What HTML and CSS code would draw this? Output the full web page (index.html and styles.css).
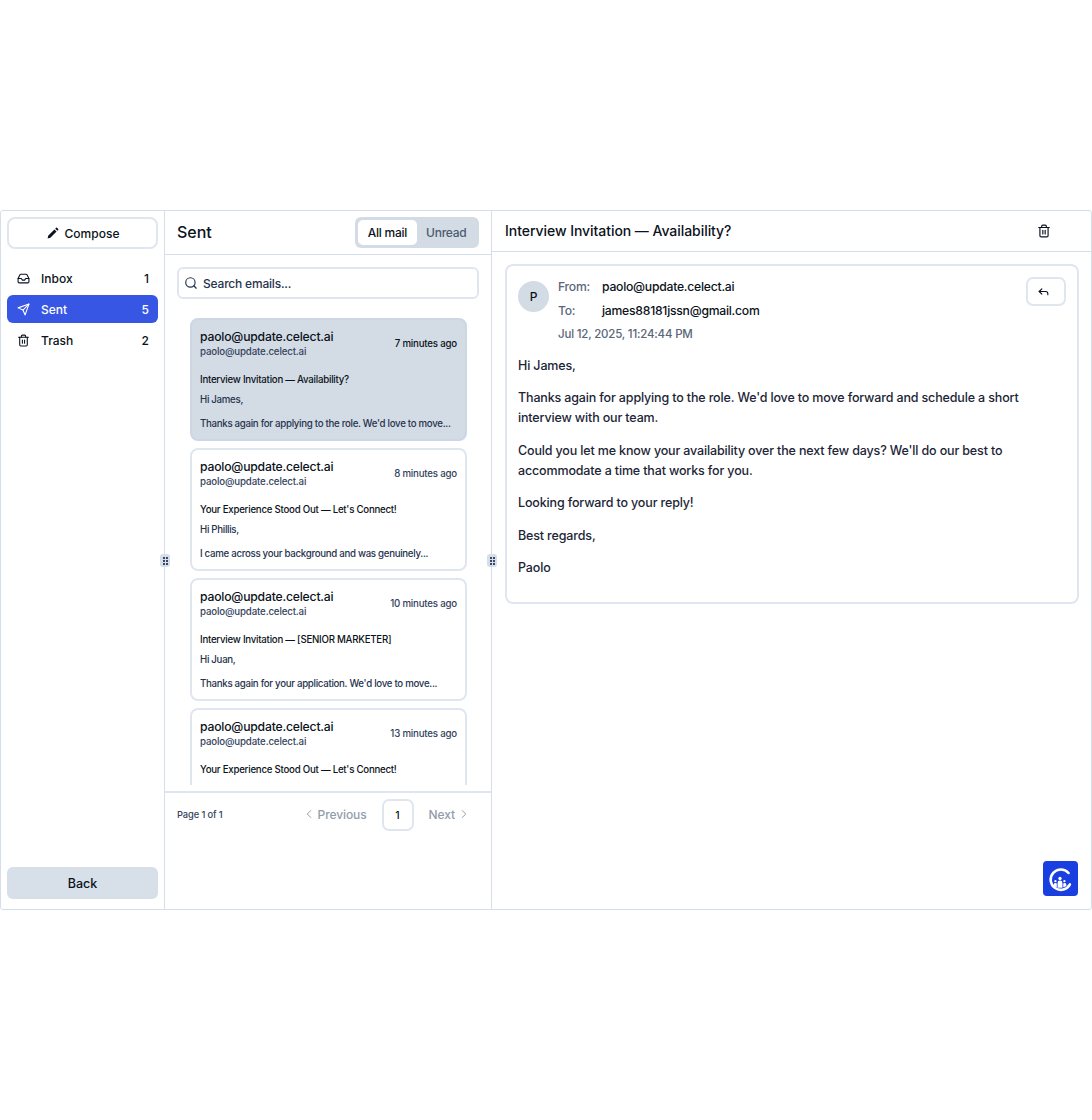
FILE: index.html
```html
<!DOCTYPE html>
<html lang="en">
<head>
  <meta charset="UTF-8">
  <title>Mail</title>
  <link rel="stylesheet" href="styles.css">
</head>
<body>

<div class="mail">
  <aside class="sidebar">
    <button class="compose">
      <svg class="icon-sm" viewBox="0 0 24 24"><path fill="currentColor" d="M3 21l1-5L15.500 4.500l4 4L8 20zM17 3l1.500-1.500a1.400 1.400 0 0 1 2 0l2 2a1.400 1.400 0 0 1 0 2L21 7z"/></svg>
      Compose
    </button>
    <nav class="nav">
      <a class="nav-item">
        <svg class="icon" viewBox="0 0 24 24"><path d="M22 12h-6l-2 3h-4l-2-3H2"/><path d="M5.500 5.100 2 12v6a2 2 0 0 0 2 2h16a2 2 0 0 0 2-2v-6l-3.500-6.900A2 2 0 0 0 16.800 4H7.200a2 2 0 0 0-1.700 1.100z"/></svg>
        <span class="nav-label">Inbox</span><span>1</span>
      </a>
      <a class="nav-item active">
        <svg class="icon" viewBox="0 0 24 24"><path d="M22 2 11 13"/><path d="M22 2 15 22l-4-9-9-4z"/></svg>
        <span class="nav-label">Sent</span><span>5</span>
      </a>
      <a class="nav-item">
        <svg class="icon" viewBox="0 0 24 24"><path d="M3 6h18"/><path d="M19 6v14a2 2 0 0 1-2 2H7a2 2 0 0 1-2-2V6"/><path d="M8 6V4a2 2 0 0 1 2-2h4a2 2 0 0 1 2 2v2"/><path d="M10 11v6"/><path d="M14 11v6"/></svg>
        <span class="nav-label">Trash</span><span>2</span>
      </a>
    </nav>
    <button class="back">Back</button>
  </aside>

  <section class="list">
    <header class="list-head">
      <h2>Sent</h2>
      <div class="tabs">
        <span class="tab on">All mail</span>
        <span class="tab">Unread</span>
      </div>
    </header>
    <div class="search">
      <svg class="icon" viewBox="0 0 24 24"><circle cx="11" cy="11" r="8"/><path d="m21 21-4.300-4.300"/></svg>
      <span>Search emails...</span>
    </div>
    <div class="cards">
      <article class="card selected">
        <div class="card-top">
          <div>
            <div class="card-name">paolo@update.celect.ai</div>
            <div class="card-mail">paolo@update.celect.ai</div>
          </div>
          <span class="card-time">7 minutes ago</span>
        </div>
        <div class="card-subject">Interview Invitation — Availability?</div>
        <p class="card-line">Hi James,</p>
        <p class="card-line gap">Thanks again for applying to the role. We'd love to move...</p>
      </article>
      <article class="card">
        <div class="card-top">
          <div>
            <div class="card-name">paolo@update.celect.ai</div>
            <div class="card-mail">paolo@update.celect.ai</div>
          </div>
          <span class="card-time">8 minutes ago</span>
        </div>
        <div class="card-subject">Your Experience Stood Out — Let's Connect!</div>
        <p class="card-line">Hi Phillis,</p>
        <p class="card-line gap">I came across your background and was genuinely...</p>
      </article>
      <article class="card">
        <div class="card-top">
          <div>
            <div class="card-name">paolo@update.celect.ai</div>
            <div class="card-mail">paolo@update.celect.ai</div>
          </div>
          <span class="card-time">10 minutes ago</span>
        </div>
        <div class="card-subject">Interview Invitation — [SENIOR MARKETER]</div>
        <p class="card-line">Hi Juan,</p>
        <p class="card-line gap">Thanks again for your application. We'd love to move...</p>
      </article>
      <article class="card">
        <div class="card-top">
          <div>
            <div class="card-name">paolo@update.celect.ai</div>
            <div class="card-mail">paolo@update.celect.ai</div>
          </div>
          <span class="card-time">13 minutes ago</span>
        </div>
        <div class="card-subject">Your Experience Stood Out — Let's Connect!</div>
      </article>
    </div>
    <footer class="pager">
      <span class="page-count">Page 1 of 1</span>
      <div class="pages">
        <span class="page-link">
          <svg class="icon-xs" viewBox="0 0 24 24"><path d="m15 18-6-6 6-6"/></svg>
          Previous
        </span>
        <span class="page-num">1</span>
        <span class="page-link">
          Next
          <svg class="icon-xs" viewBox="0 0 24 24"><path d="m9 18 6-6-6-6"/></svg>
        </span>
      </div>
    </footer>
    <span class="grip grip-left"><i></i><i></i><i></i><i></i><i></i><i></i></span>
    <span class="grip grip-right"><i></i><i></i><i></i><i></i><i></i><i></i></span>
  </section>

  <main class="detail">
    <header class="detail-head">
      <h1>Interview Invitation — Availability?</h1>
      <svg class="icon trash" viewBox="0 0 24 24"><path d="M3 6h18"/><path d="M19 6v14a2 2 0 0 1-2 2H7a2 2 0 0 1-2-2V6"/><path d="M8 6V4a2 2 0 0 1 2-2h4a2 2 0 0 1 2 2v2"/><path d="M10 11v6"/><path d="M14 11v6"/></svg>
    </header>
    <div class="message">
      <div class="message-top">
        <div class="avatar">P</div>
        <div class="meta">
          <div class="meta-row"><span class="meta-key">From:</span><span>paolo@update.celect.ai</span></div>
          <div class="meta-row"><span class="meta-key">To:</span><span>james88181jssn@gmail.com</span></div>
          <div class="meta-date">Jul 12, 2025, 11:24:44 PM</div>
        </div>
        <button class="reply">
          <svg class="icon-sm" viewBox="0 0 24 24"><path d="M9 17 4 12l5-5"/><path d="M20 18v-2a4 4 0 0 0-4-4H4"/></svg>
        </button>
      </div>
      <div class="message-body">
        <p>Hi James,</p>
        <p>Thanks again for applying to the role. We'd love to move forward and schedule a short interview with our team.</p>
        <p>Could you let me know your availability over the next few days? We'll do our best to accommodate a time that works for you.</p>
        <p>Looking forward to your reply!</p>
        <p>Best regards,</p>
        <p>Paolo</p>
      </div>
    </div>
    <div class="logo">
      <svg viewBox="0 0 36 36" width="35" height="35">
        <rect width="36" height="36" rx="4" fill="#1a3fe0"/>
        <path d="M26.300 12.300A10.500 10.500 0 1 0 27.700 24" fill="none" stroke="#fff" stroke-width="2.600" stroke-linecap="round"/>
        <g fill="#fff">
          <circle cx="17.500" cy="18" r="1.700"/><circle cx="12.800" cy="20.700" r="1.200"/><circle cx="22" cy="20.700" r="1.200"/>
          <path d="M15 27.500v-5a2.500 2.500 0 0 1 5 0v5z"/>
          <path d="M11 26v-1.800a1.800 1.800 0 0 1 3.200-1v3.800zM24 26v-1.800a1.800 1.800 0 0 0-3.200-1v3.800z"/>
        </g>
      </svg>
    </div>
  </main>
</div>

</body>
</html>
```

FILE: styles.css
```css
* {
  box-sizing: border-box;
}
body {
  margin: 0;
  padding-top: 210px;
  background: #fff;
  color: #0b1220;
  font-family: Inter, "Noto Sans", sans-serif;
}
svg {
  fill: none;
  stroke: currentColor;
  stroke-width: 2;
  stroke-linecap: round;
  stroke-linejoin: round;
  flex-shrink: 0;
}
.icon {
  width: 14px;
  height: 14px;
}
.icon-sm {
  width: 13px;
  height: 13px;
}
.icon-xs {
  width: 14px;
  height: 14px;
  stroke-width: 1.700;
}
.mail {
  position: relative;
  display: flex;
  height: 700px;
  border: 1px solid #d5deea;
  border-radius: 3px;
}

/* sidebar */
.sidebar {
  width: 164px;
  display: flex;
  flex-direction: column;
  padding: 6px 6px 10px;
  border-right: 1px solid #d5deea;
}
.compose {
  display: flex;
  align-items: center;
  justify-content: center;
  gap: 6px;
  height: 32px;
  background: #fff;
  border: 2px solid #e0e6f0;
  border-radius: 8px;
  font: 500 12px Inter, sans-serif;
  color: #0b1220;
}
.compose svg {
  stroke: none;
}
.nav {
  margin-top: 15px;
  flex: 1;
  display: flex;
  flex-direction: column;
  gap: 3px;
}
.nav-item {
  display: flex;
  align-items: center;
  height: 28px;
  padding: 0 9px 0 10px;
  gap: 11px;
  border-radius: 6px;
  font-size: 12px;
  font-weight: 500;
}
.nav-item .icon {
  width: 13px;
  height: 13px;
}
.nav-label {
  flex: 1;
}
.nav-item.active {
  background: #3756e4;
  color: #fff;
}
.back {
  height: 32px;
  background: #d7dfe9;
  border: 0;
  border-radius: 6px;
  font: 500 12.500px Inter, sans-serif;
  color: #0b1220;
}

/* list column */
.list {
  width: 327px;
  display: flex;
  flex-direction: column;
  border-right: 1px solid #d5deea;
}
.list-head {
  height: 44px;
  display: flex;
  align-items: center;
  justify-content: space-between;
  padding: 0 12px;
  border-bottom: 1px solid #d5deea;
}
.list-head h2 {
  margin: -2px 0 0;
  font-size: 16px;
  font-weight: 500;
}
.tabs {
  display: flex;
  height: 31px;
  padding: 3px;
  background: #d3dbe5;
  border-radius: 6px;
}
.tab {
  display: flex;
  align-items: center;
  padding: 0 9.500px;
  font-size: 12px;
  font-weight: 500;
  letter-spacing: -0.250px;
  color: #4b5a70;
  border-radius: 5px;
}
.tab.on {
  background: #fff;
  color: #0b1220;
}
.search {
  display: flex;
  align-items: center;
  gap: 5px;
  height: 32px;
  margin: 12px 12px 0;
  padding: 0 5px;
  border: 2px solid #e0e6f0;
  border-radius: 6px;
  font-size: 12px;
  font-weight: 500;
  letter-spacing: -0.200px;
  color: #26344d;
}
.cards {
  flex: 1;
  min-height: 0;
  overflow: hidden;
  display: flex;
  flex-direction: column;
  gap: 7px;
  margin: 3px 0 6px;
  padding: 16px 24px 0 25px;
}
.card {
  flex-shrink: 0;
  height: 123px;
  padding: 9px 8px;
  border: 2px solid #e0e6f0;
  border-radius: 8px;
  white-space: nowrap;
}
.card.selected {
  background: #d3dbe5;
  border-color: #cdd7e4;
}
.card-top {
  display: flex;
  align-items: center;
  justify-content: space-between;
}
.card-name {
  font-size: 12.200px;
  font-weight: 500;
  letter-spacing: -0.200px;
  line-height: 16px;
}
.card-mail {
  font-size: 9.700px;
  font-weight: 500;
  letter-spacing: -0.150px;
  line-height: 13px;
  color: #33425c;
}
.card-time {
  font-size: 9.700px;
  font-weight: 500;
  letter-spacing: -0.200px;
  color: #33425c;
}
.selected .card-time {
  color: #0b1220;
}
.card-subject {
  margin-top: 15px;
  font-size: 9.700px;
  font-weight: 500;
  letter-spacing: -0.250px;
  line-height: 14px;
}
.card-line {
  margin: 6px 0 0;
  font-size: 9.700px;
  font-weight: 500;
  letter-spacing: -0.300px;
  line-height: 14px;
  color: #26344d;
}
.card-line.gap {
  margin-top: 10px;
}
.pager {
  height: 118px;
  display: flex;
  align-items: flex-start;
  justify-content: space-between;
  padding: 6px 12px 0;
  border-top: 2px solid #e0e6f0;
}
.page-count {
  line-height: 32px;
  font-size: 9.300px;
  font-weight: 500;
  letter-spacing: -0.100px;
  color: #33425c;
}
.pages {
  display: flex;
  align-items: center;
  gap: 15px;
  margin-right: 8px;
}
.page-link {
  display: flex;
  align-items: center;
  gap: 2px;
  padding-bottom: 2px;
  font-size: 12px;
  font-weight: 500;
  letter-spacing: -0.100px;
  color: #939cab;
}
.page-num {
  width: 32px;
  height: 32px;
  display: flex;
  align-items: center;
  justify-content: center;
  border: 2px solid #e0e6f0;
  border-radius: 7px;
  font-size: 10.500px;
  font-weight: 500;
}
.grip {
  position: absolute;
  top: 343px;
  width: 10px;
  height: 13px;
  padding: 2px 2px;
  display: grid;
  grid-template-columns: 2px 2px;
  justify-content: center;
  align-content: center;
  gap: 1px;
  background: #d5deea;
  border-radius: 3px;
}
.grip i {
  width: 2px;
  height: 2px;
  background: #3c4a60;
}
.grip-left {
  left: 159px;
}
.grip-right {
  left: 486px;
}

/* message */
.detail {
  position: relative;
  flex: 1;
}
.detail-head {
  height: 41px;
  display: flex;
  align-items: center;
  justify-content: space-between;
  padding: 0 40px 0 13px;
  border-bottom: 1px solid #d5deea;
}
.detail-head h1 {
  margin: -2px 0 0;
  font-size: 14px;
  font-weight: 500;
  letter-spacing: -0.050px;
}
.message {
  margin: 12px 12px 0 13px;
  padding: 15px 11px 12px 11px;
  border: 2px solid #e0e6f0;
  border-radius: 8px;
}
.message-top {
  display: flex;
  align-items: flex-start;
  gap: 9px;
}
.avatar {
  width: 31px;
  height: 31px;
  display: flex;
  align-items: center;
  justify-content: center;
  border-radius: 50%;
  background: #d3dbe5;
  font-size: 12px;
  font-weight: 500;
}
.meta {
  flex: 1;
  margin-top: -7px;
  font-size: 12.200px;
  font-weight: 500;
  letter-spacing: -0.250px;
}
.meta-row {
  display: flex;
  height: 24px;
  align-items: center;
}
.meta-key {
  width: 44px;
  color: #5a6679;
}
.meta-date {
  height: 24px;
  display: flex;
  align-items: center;
  font-size: 11.500px;
  letter-spacing: -0.200px;
  color: #5a6679;
}
.reply {
  width: 40px;
  height: 29px;
  margin-top: -4px;
  padding: 0 6px 0 0;
  display: flex;
  align-items: center;
  justify-content: center;
  background: #fff;
  border: 2px solid #e0e6f0;
  border-radius: 7px;
  color: #0b1220;
}
.message-body {
  margin-top: 10px;
  font-size: 12.500px;
  font-weight: 500;
  letter-spacing: -0.150px;
  line-height: 20px;
  color: #1c2536;
}
.message-body p {
  margin: 0 0 12.400px;
}
.logo {
  position: absolute;
  right: 13px;
  bottom: 13px;
  height: 35px;
}
.logo svg {
  display: block;
  stroke: none;
}
```
